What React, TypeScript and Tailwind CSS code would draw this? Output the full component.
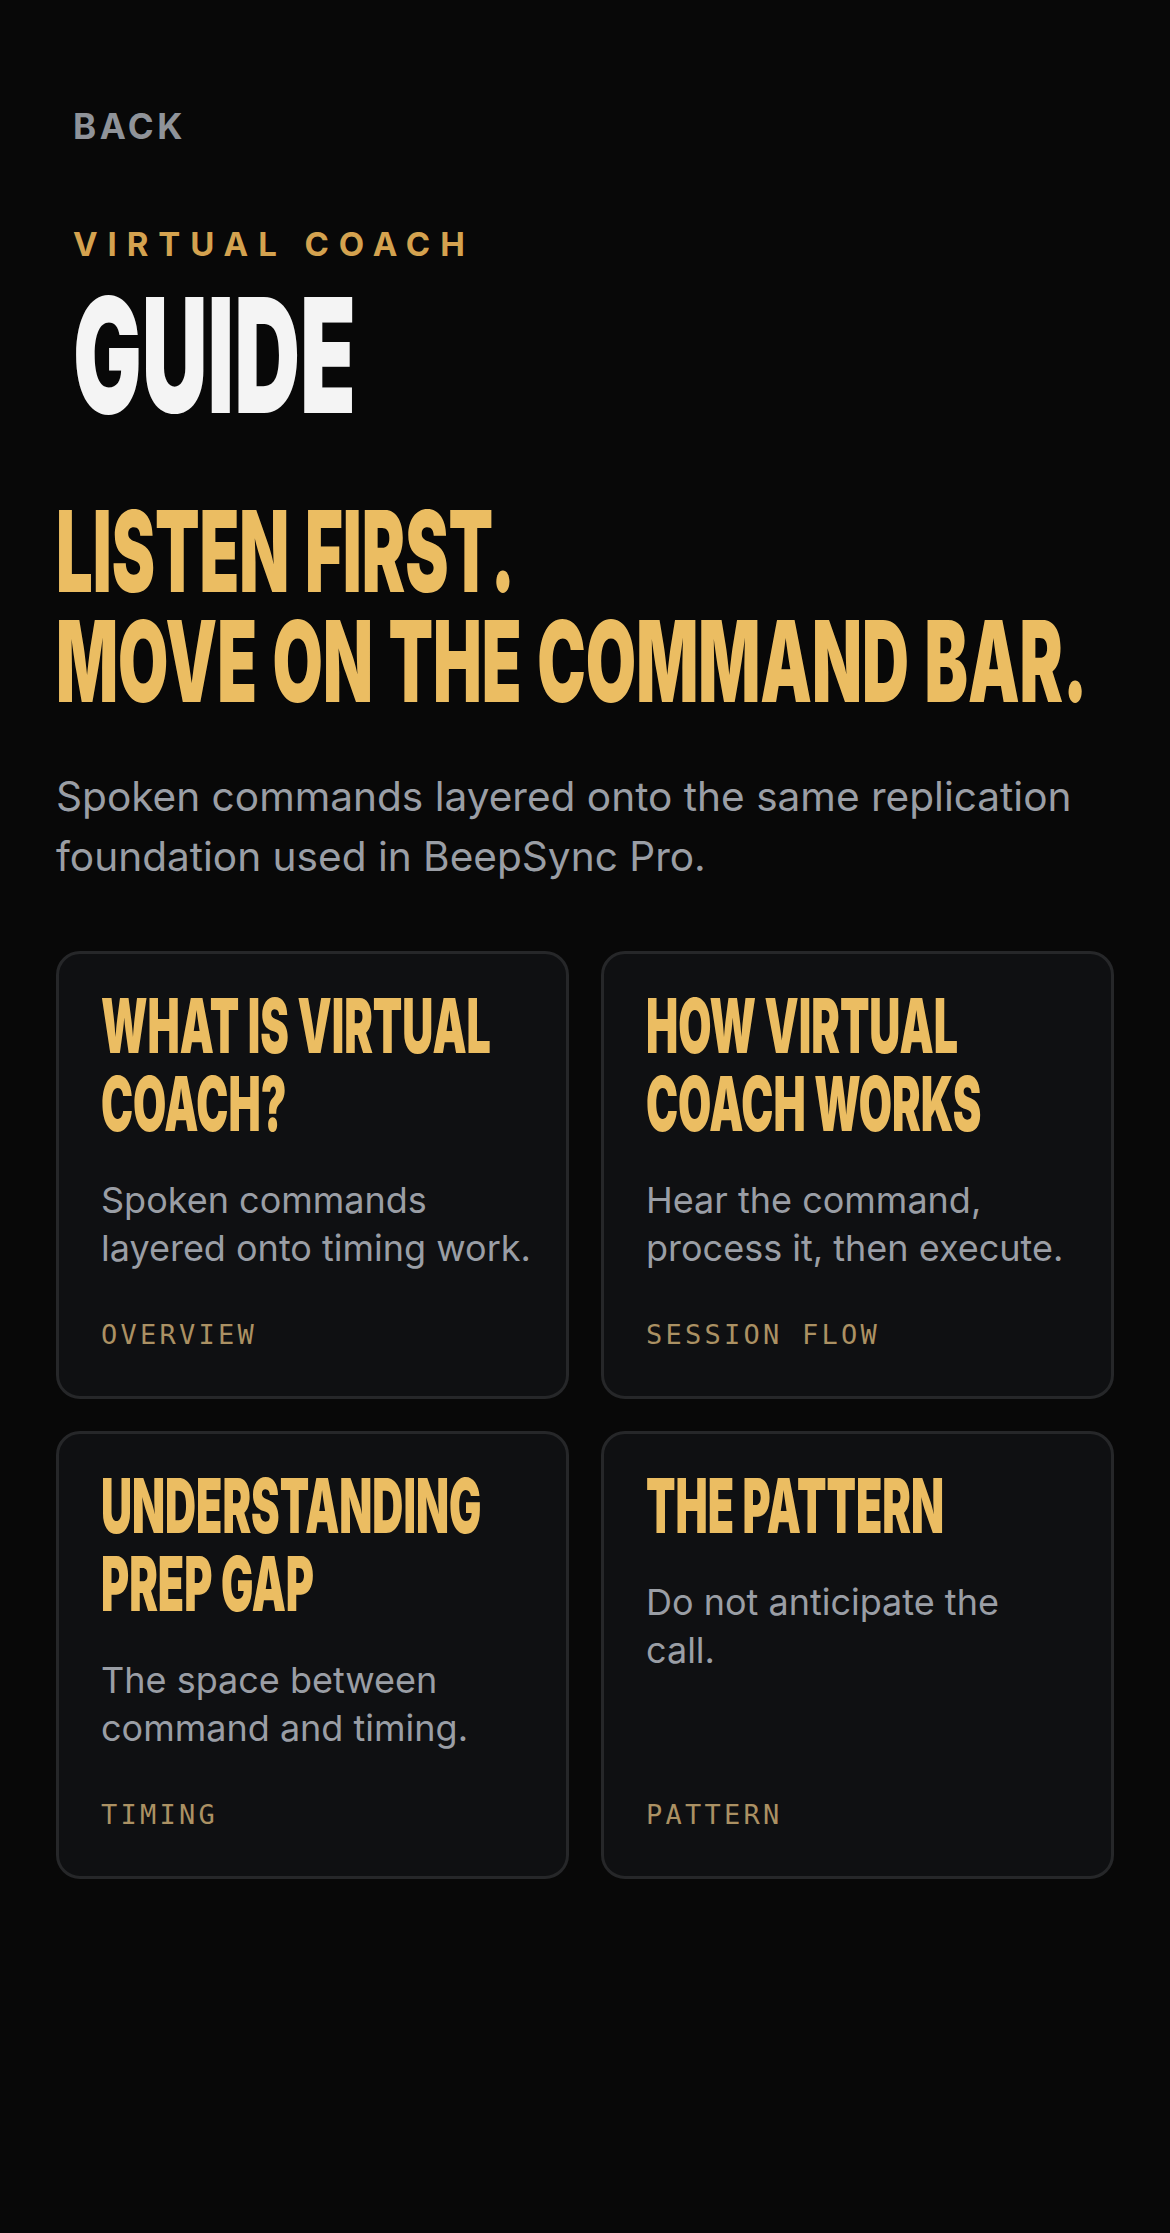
import React from "react";

const cards = [
  {
    title: ["WHAT IS VIRTUAL", "COACH?"],
    body: ["Spoken commands", "layered onto timing work."],
    tag: "OVERVIEW",
  },
  {
    title: ["HOW VIRTUAL", "COACH WORKS"],
    body: ["Hear the command,", "process it, then execute."],
    tag: "SESSION FLOW",
  },
  {
    title: ["UNDERSTANDING", "PREP GAP"],
    body: ["The space between", "command and timing."],
    tag: "TIMING",
  },
  {
    title: ["THE PATTERN"],
    body: ["Do not anticipate the", "call."],
    tag: "PATTERN",
  },
];

export default function App() {
  return (
    <div className="min-h-screen w-full bg-[#080808] px-[56px] pt-[102px] pb-[120px] font-['Inter','Noto_Sans',sans-serif]">
      <div className="pl-[17px]">
        <div className="text-[35px] leading-[48px] font-bold tracking-[0.1em] text-[#8f9399]">
          BACK
        </div>
        <div className="mt-[72px] text-[33px] leading-[44px] font-bold tracking-[0.3em] text-[#d4a24f]">
          VIRTUAL COACH
        </div>
        <div className="mt-[9px] text-[160px] leading-[160px] font-black text-[#f4f4f4]">
          <span className="block w-fit origin-left scale-x-[0.57] whitespace-nowrap">GUIDE</span>
        </div>
      </div>

      <h1 className="mt-[61px] text-[113px] leading-[110px] font-black text-[#ebbd62] [word-spacing:0.04em]">
        <span className="block w-fit origin-left scale-x-[0.575] whitespace-nowrap">LISTEN FIRST.</span>
        <span className="block w-fit origin-left scale-x-[0.575] whitespace-nowrap">MOVE ON THE COMMAND BAR.</span>
      </h1>

      <p className="mt-[51px] text-[40.6px] leading-[60px] text-[#9a9ea5]">
        Spoken commands layered onto the same replication foundation used in BeepSync Pro.
      </p>

      <div className="mt-[64px] grid grid-cols-2 gap-[32px]">
        {cards.map((c) => (
          <div
            key={c.tag}
            className="flex flex-col rounded-[24px] border-[3px] border-[#262729] bg-[#0f1012] px-[42px] pt-[32px] pb-[44px]"
          >
            <h2 className="text-[76px] leading-[78px] font-black text-[#ebbd62]">
              {c.title.map((t) => (
                <span key={t} className="block w-fit origin-left scale-x-[0.565] whitespace-nowrap">
                  {t}
                </span>
              ))}
            </h2>
            <p className="mt-[34px] text-[36px] leading-[48px] text-[#9a9ea5] whitespace-nowrap">
              {c.body.map((b) => (
                <span key={b} className="block">
                  {b}
                </span>
              ))}
            </p>
            <div className="mt-auto pt-[46px] font-['DejaVu_Sans_Mono','Liberation_Mono',monospace] text-[27px] leading-[34px] tracking-[0.12em] text-[#ab9163]">
              {c.tag}
            </div>
          </div>
        ))}
      </div>
    </div>
  );
}
